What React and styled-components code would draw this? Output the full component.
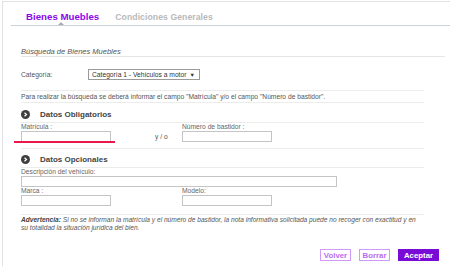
import React from "react";
import styled, { createGlobalStyle } from "styled-components";

const Global = createGlobalStyle`
  html, body { margin: 0; padding: 0; background: #fff; }
  body { font-family: "Liberation Sans", Arial, sans-serif; color: #555; }
  * { box-sizing: border-box; }
`;

const Frame = styled.div`
  margin: 1px 0 0 2px;
  height: 265px;
  border-top: 1px solid #e2e2e2;
  border-left: 1px solid #e2e2e2;
`;

const TabBar = styled.div`
  margin-left: 8px;
  height: 24px;
  display: flex;
  align-items: flex-start;
  gap: 16px;
  padding: 9px 0 0 15px;
  border-bottom: 1px solid #c9d1d9;
`;

const Tab = styled.div`
  position: relative;
  font-weight: bold;
  line-height: 12px;
  font-size: ${(p) => (p.$active ? "9.7px" : "8.7px")};
  color: ${(p) => (p.$active ? "#8c07e8" : "#b9b9b9")};
  letter-spacing: ${(p) => (p.$active ? "0" : "0.05px")};
`;

const Caret = styled.span`
  position: absolute;
  left: 32px;
  top: 11px;
  width: 0;
  height: 0;
  border-left: 3.5px solid transparent;
  border-right: 3.5px solid transparent;
  border-bottom: 3px solid #a7adb4;
`;

const Body = styled.div`
  padding-left: 18px;
  width: 421px;
`;

const PageTitle = styled.div`
  margin: 21px -21px 0 0;
  font-style: italic;
  font-size: 7.5px;
  line-height: 9px;
  color: #555;
  border-bottom: 1px solid #e6e6e6;
`;

const FieldRow = styled.div`
  display: flex;
  align-items: center;
  margin-top: 12px;
  font-size: 6.7px;
  color: #555;
`;

const RowLabel = styled.span`
  width: 67px;
`;

const SelectBox = styled.div`
  width: 112px;
  height: 11px;
  border: 1px solid #9a9a9a;
  display: flex;
  align-items: center;
  justify-content: space-between;
  padding: 0 4px 0 3px;
  font-size: 6.7px;
  color: #333;
  background: #fff;
`;

const Arrow = styled.span`
  font-size: 5.5px;
  color: #333;
`;

const Note = styled.div`
  margin-top: 10px;
  padding: 1px 0;
  font-size: 6.7px;
  line-height: 9px;
  color: #555;
  border-top: 1px solid #ececec;
  border-bottom: 1px solid #ececec;
`;

const SectionHeader = styled.div`
  display: flex;
  align-items: center;
  gap: 10px;
  height: 20px;
  padding-top: 3px;
  font-size: 8px;
  font-weight: bold;
  color: #444;
  border-top: ${(p) => (p.$topRule ? "1px solid #ececec" : "none")};
  border-bottom: 1px solid #ececec;
  margin-top: ${(p) => (p.$topRule ? "6px" : "0")};
`;

const Bullet = styled.span`
  width: 9px;
  height: 9px;
  border-radius: 50%;
  background: #3f3f3f;
  display: flex;
  align-items: center;
  justify-content: center;
`;

const FieldGrid = styled.div`
  display: grid;
  grid-template-columns: 90px 71px 90px;
  align-items: end;
`;

const Field = styled.div`
  display: flex;
  flex-direction: column;
  position: relative;
  grid-column: ${(p) => p.$span || "auto"};
`;

const Label = styled.label`
  font-size: 6.7px;
  line-height: 8px;
  height: 8px;
  color: #666;
  white-space: nowrap;
`;

const Input = styled.div`
  width: ${(p) => p.$w || "90px"};
  height: 11px;
  border: 1px solid #c4c4c4;
  background: #fff;
`;

const RedMark = styled.span`
  position: absolute;
  left: -7px;
  bottom: -1px;
  width: 101px;
  height: 2px;
  background: #e8184d;
`;

const Conj = styled.span`
  font-size: 6.7px;
  color: #555;
  padding-left: 44px;
  height: 11px;
  line-height: 11px;
`;

const Warning = styled.p`
  margin: 8px 0 0;
  padding-top: 1px;
  border-top: 1px solid #ececec;
  font-size: 6.6px;
  line-height: 8px;
  font-style: italic;
  color: #555;
  b { color: #444; }
`;

const Actions = styled.div`
  display: flex;
  justify-content: flex-end;
  gap: 8px;
  margin: 17px -15px 0 0;
`;

const Button = styled.div`
  width: ${(p) => p.$w};
  height: 12px;
  display: flex;
  align-items: center;
  justify-content: center;
  font-size: 7.8px;
  font-weight: bold;
  border: 1.5px solid ${(p) => (p.$primary ? "#7a0ad6" : "#d09bf8")};
  background: ${(p) => (p.$primary ? "#7a0ad6" : "#fff")};
  color: ${(p) => (p.$primary ? "#fff" : "#b86cf0")};
`;

const Chevron = () => (
  <svg width="5" height="5" viewBox="0 0 10 10">
    <path d="M3 1.5 L7 5 L3 8.5" fill="none" stroke="#fff" strokeWidth="2.4" />
  </svg>
);

export default function App() {
  return (
    <>
      <Global />
      <Frame>
        <TabBar>
          <Tab $active>
            Bienes Muebles
            <Caret />
          </Tab>
          <Tab>Condiciones Generales</Tab>
        </TabBar>
        <Body>
          <PageTitle>Búsqueda de Bienes Muebles</PageTitle>
          <FieldRow>
            <RowLabel>Categoría:</RowLabel>
            <SelectBox>
              <span>Categoría 1 - Vehículos a motor</span>
              <Arrow>▼</Arrow>
            </SelectBox>
          </FieldRow>
          <Note>
            Para realizar la búsqueda se deberá informar el campo "Matrícula" y/o el campo "Número de bastidor".
          </Note>
          <SectionHeader>
            <Bullet><Chevron /></Bullet>
            Datos Obligatorios
          </SectionHeader>
          <FieldGrid>
            <Field>
              <Label>Matrícula :</Label>
              <Input />
              <RedMark />
            </Field>
            <Conj>y / o</Conj>
            <Field>
              <Label>Número de bastidor :</Label>
              <Input />
            </Field>
          </FieldGrid>
          <SectionHeader $topRule>
            <Bullet><Chevron /></Bullet>
            Datos Opcionales
          </SectionHeader>
          <FieldGrid>
            <Field $span="1 / 4">
              <Label>Descripción del vehículo:</Label>
              <Input $w="316px" />
            </Field>
            <Field>
              <Label>Marca :</Label>
              <Input />
            </Field>
            <span />
            <Field>
              <Label>Modelo:</Label>
              <Input />
            </Field>
          </FieldGrid>
          <Warning>
            <b>Advertencia:</b> Si no se informan la matrícula y el número de bastidor, la nota informativa solicitada puede no recoger con exactitud y en su totalidad la situación jurídica del bien.
          </Warning>
          <Actions>
            <Button $w="31px">Volver</Button>
            <Button $w="31px">Borrar</Button>
            <Button $w="41px" $primary>Aceptar</Button>
          </Actions>
        </Body>
      </Frame>
    </>
  );
}
